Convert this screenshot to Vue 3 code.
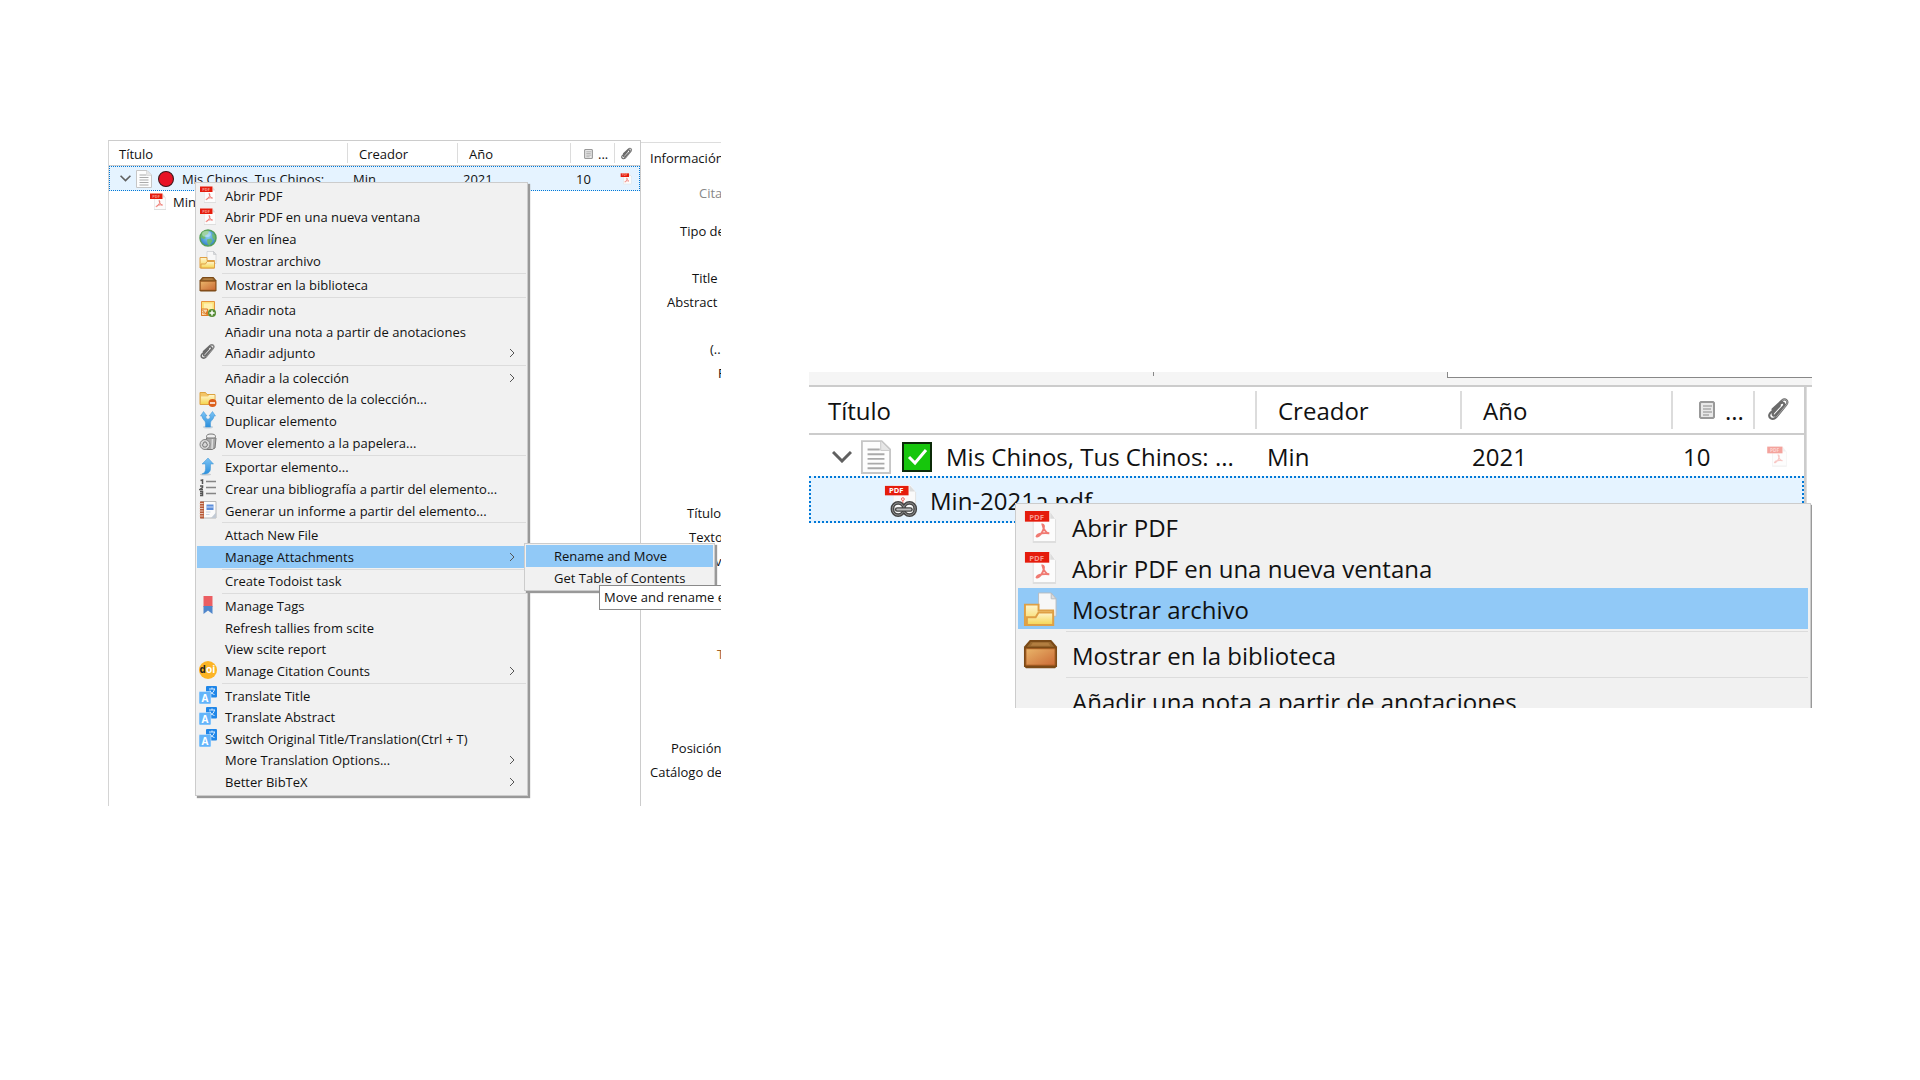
<script setup>
const mainMenu = [
  [
    { label: 'Abrir PDF', icon: 'pdf' },
    { label: 'Abrir PDF en una nueva ventana', icon: 'pdf' },
    { label: 'Ver en línea', icon: 'globe' },
    { label: 'Mostrar archivo', icon: 'folder' }
  ],
  [{ label: 'Mostrar en la biblioteca', icon: 'box' }],
  [
    { label: 'Añadir nota', icon: 'note-add' },
    { label: 'Añadir una nota a partir de anotaciones' },
    { label: 'Añadir adjunto', icon: 'clip', sub: true }
  ],
  [
    { label: 'Añadir a la colección', sub: true },
    { label: 'Quitar elemento de la colección...', icon: 'folder-remove' },
    { label: 'Duplicar elemento', icon: 'duplicate' },
    { label: 'Mover elemento a la papelera...', icon: 'trash' }
  ],
  [
    { label: 'Exportar elemento...', icon: 'export' },
    { label: 'Crear una bibliografía a partir del elemento...', icon: 'list' },
    { label: 'Generar un informe a partir del elemento...', icon: 'report' }
  ],
  [
    { label: 'Attach New File' },
    { label: 'Manage Attachments', sub: true, active: true }
  ],
  [{ label: 'Create Todoist task' }],
  [
    { label: 'Manage Tags', icon: 'tag' },
    { label: 'Refresh tallies from scite' },
    { label: 'View scite report' },
    { label: 'Manage Citation Counts', icon: 'doi', sub: true }
  ],
  [
    { label: 'Translate Title', icon: 'translate' },
    { label: 'Translate Abstract', icon: 'translate' },
    { label: 'Switch Original Title/Translation(Ctrl + T)', icon: 'translate' },
    { label: 'More Translation Options...', sub: true },
    { label: 'Better BibTeX', sub: true }
  ]
]

const fileMenu = [
  [
    { label: 'Abrir PDF', icon: 'pdf' },
    { label: 'Abrir PDF en una nueva ventana', icon: 'pdf' },
    { label: 'Mostrar archivo', icon: 'folder', active: true }
  ],
  [{ label: 'Mostrar en la biblioteca', icon: 'box' }],
  [{ label: 'Añadir una nota a partir de anotaciones' }]
]

const submenu = [
  { label: 'Rename and Move', active: true },
  { label: 'Get Table of Contents' }
]

// Field labels of the details pane: indent from the pane edge and row height
const fields = [
  { label: 'Información', indent: 9, height: 27 },
  { label: 'Cita', indent: 58, height: 35, muted: true },
  { label: 'Tipo de', indent: 39, height: 38 },
  { label: 'Title', indent: 51, height: 47 },
  { label: 'Abstract', indent: 26, height: 24 },
  { label: '(...', indent: 69, height: 47 },
  { label: 'P', indent: 77, height: 24 },
  { label: 'Título', indent: 46, height: 140 },
  { label: 'Texto', indent: 48, height: 24 },
  { label: 'v', indent: 74, height: 24 },
  { label: 'T', indent: 76, height: 93, warm: true },
  { label: 'Posición', indent: 30, height: 94 },
  { label: 'Catálogo de', indent: 9, height: 24 }
]
</script>

<template>
  <main class="page">
    <svg class="sprite" width="0" height="0" aria-hidden="true">
      <defs>
        <linearGradient id="g-box" x1="0" y1="0" x2="1" y2="1">
          <stop offset="0" stop-color="#e9b56a" /><stop offset="1" stop-color="#cb6a35" />
        </linearGradient>
        <linearGradient id="g-blue" x1="0" y1="0" x2="0" y2="1">
          <stop offset="0" stop-color="#7cc4f5" /><stop offset="1" stop-color="#2b8fdc" />
        </linearGradient>
        <linearGradient id="g-folder" x1="0" y1="0" x2="0" y2="1">
          <stop offset="0" stop-color="#fff6d0" /><stop offset="1" stop-color="#f5d550" />
        </linearGradient>
        <radialGradient id="g-globe" cx=".5" cy=".4" r=".6">
          <stop offset="0" stop-color="#8fd0f6" /><stop offset="1" stop-color="#2f7fc9" />
        </radialGradient>
      </defs>
      <symbol id="pdf" viewBox="0 0 36 36">
        <path d="M10 3h18l6 7v24H10z" fill="#dedede" />
        <path d="M11 2h17l5 6v24H11z" fill="#fcfcfc" />
        <path d="M28 2l5 7h-5z" fill="#dcdcdc" />
        <path d="M20 15c3 0 1 6-1 9-2 2-4 4-5 3 1-3 8-4 13-3-3 0-6-4-7-9z" fill="none" stroke="#f07a72" stroke-width="2" />
        <path d="M2 1h25v11H2z" fill="#e51c0c" />
        <text x="14" y="10" text-anchor="middle" font-size="8" font-weight="700" fill="#f79a90">PDF</text>
      </symbol>
      <symbol id="pdf-link" viewBox="0 0 36 36">
        <path d="M10 2h18l6 7v24H10z" fill="#e2e2e2" />
        <path d="M10 1h18l5 7v23H10z" fill="#fafafa" />
        <path d="M27 1l6 7h-6z" fill="#dcdcdc" />
        <circle cx="20" cy="16" r="1.500" fill="none" stroke="#ee5b52" />
        <path d="M20 18v5" stroke="#ee5b52" />
        <path d="M1 2h25v10H1z" fill="#e51c0c" />
        <text x="13" y="10" text-anchor="middle" font-size="8" font-weight="700" fill="#fff">PDF</text>
        <g fill="none" stroke="#454545" stroke-width="4">
          <rect x="9" y="20" width="12" height="13" rx="6" /><rect x="21" y="20" width="12" height="13" rx="6" />
        </g>
        <g fill="none" stroke="#999" stroke-width="1">
          <rect x="9" y="20" width="12" height="13" rx="6" /><rect x="21" y="20" width="12" height="13" rx="6" />
        </g>
        <path d="M14 27h14" stroke="#454545" stroke-width="5" stroke-linecap="round" />
        <path d="M14 27h14" stroke="#bbb" stroke-width="2" stroke-linecap="round" />
      </symbol>
      <symbol id="globe" viewBox="0 0 36 36">
        <circle cx="18" cy="18" r="16" fill="url(#g-globe)" stroke="#559f58" stroke-width="3" />
        <path d="M5 9c4-6 11-7 15-5l-2 6-6 3 1 6-5 1-5-4zM16 21l8-2 3 5-6 9-4-3zM26 8l6 5v10l-5-5z" fill="#70bd62" opacity=".85" />
        <ellipse cx="15" cy="10" rx="9" ry="6" fill="#fff" opacity=".35" />
      </symbol>
      <symbol id="folder" viewBox="0 0 36 36">
        <path d="M16 1h13l5 6v18H16z" fill="#f7f7f7" stroke="#b9bcc0" stroke-width="1" />
        <path d="M29 1v6h5z" fill="#ddd" stroke="#b9bcc0" />
        <path d="M2 13h14v6h15v15H2z" fill="url(#g-folder)" stroke="#dfa045" stroke-width="2" />
        <path d="M4 34V26h9l3-5h15v13z" fill="url(#g-folder)" stroke="#dfa045" stroke-width="2" />
      </symbol>
      <symbol id="box" viewBox="0 0 36 36">
        <path d="M7 2h22l6 7v20l-2 2H3l-2-2V9z" fill="#7b4a17" />
        <path d="M8 4h20l4 5H4z" fill="#9b6a30" />
        <path d="M10 5h16l2 3H8z" fill="#b27e40" />
        <path d="M3 11h30v17H3z" fill="url(#g-box)" stroke="#a35a20" />
      </symbol>
      <symbol id="note-add" viewBox="0 0 36 36">
        <path d="M5 3h26v28H5z" fill="#fbe27a" stroke="#e6943c" stroke-width="2" />
        <path d="M10 7h17v11H10z" fill="#fff1b0" />
        <path d="M5 18h12v13H5z" fill="#f7d9ae" stroke="#dc7b26" stroke-width="2" />
        <path d="M7 20l8 9v-6M7 24l5 5" stroke="#dc7b26" stroke-width="2" fill="none" />
        <circle cx="26" cy="26" r="8" fill="#568c35" />
        <path d="M21 26h10M26 21v10" stroke="#fff" stroke-width="3" />
      </symbol>
      <symbol id="clip" viewBox="0 0 36 36">
        <path d="M9 17L22 5c5-4 10 1 6 6L14 28c-5 5-13 0-8-6L20 9c4-3 7 0 4 4L13 25c-2 2-5 0-3-3l9-10" fill="none" stroke="#6a6a6a" stroke-width="3" stroke-linecap="round" />
        <path d="M22 5c5-4 10 1 6 6L14 28" fill="none" stroke="#bbb" stroke-width="1" />
      </symbol>
      <symbol id="folder-remove" viewBox="0 0 36 36">
        <path d="M2 5h11l3 4h16v20H2z" fill="#f3c567" stroke="#dca340" stroke-width="2" />
        <path d="M4 13h14l3-3h10v18H4z" fill="url(#g-folder)" />
        <circle cx="27" cy="26" r="8" fill="#dc5f1c" /><path d="M22 26h10" stroke="#fff" stroke-width="3" />
      </symbol>
      <symbol id="duplicate" viewBox="0 0 36 36">
        <ellipse cx="18" cy="32" rx="10" ry="3" fill="#c5d2dd" />
        <path d="M3 10L9 1l7 9h-3c0 4 3 5 5 7 2-2 5-3 5-7h-3l7-9 6 9h-3c0 7-7 9-7 14v8H13v-8c0-5-7-7-7-14z" fill="url(#g-blue)" stroke="#3f94d4" />
      </symbol>
      <symbol id="trash" viewBox="0 0 36 36">
        <ellipse cx="24" cy="7" rx="9" ry="5" fill="#eee" stroke="#777" stroke-width="2" />
        <path d="M15 10h19l-2 20-6 3H15z" fill="#aaa" stroke="#777" stroke-width="2" />
        <path d="M27 12l-1 20" stroke="#ddd" stroke-width="3" />
        <circle cx="12" cy="23" r="10" fill="#d6d6d6" stroke="#858585" stroke-width="2" />
        <path d="M7 24l3-6h4l3 6-3 4H9z" fill="none" stroke="#777" stroke-width="2" />
      </symbol>
      <symbol id="export" viewBox="0 0 36 36">
        <ellipse cx="13" cy="33" rx="11" ry="2" fill="#c8ccd0" />
        <path d="M18 0l11 12h-6v9c0 8-6 12-17 11 5-2 7-5 7-11v-9H6z" fill="url(#g-blue)" stroke="#3f94d4" />
      </symbol>
      <symbol id="list" viewBox="0 0 36 36">
        <path d="M14 5h20M14 17h20M14 29h20" stroke="#858585" stroke-width="3" />
        <path d="M3 3l4-1v8M2 14h5v3l-5 4h6M2 25h5v8H2M2 29h5" stroke="#555" stroke-width="3" fill="none" />
      </symbol>
      <symbol id="report" viewBox="0 0 36 36">
        <path d="M4 1h30v33H4z" fill="#fbfbfb" stroke="#b8b8b8" stroke-width="2" />
        <path d="M2 1h8v34H2z" fill="#b85b38" />
        <path d="M1 5h8M1 10h8M1 15h8M1 20h8M1 25h8M1 30h8" stroke="#e7c5b7" stroke-width="2" />
        <path d="M15 7h14v11H15z" fill="#5d8edb" /><path d="M15 12h14" stroke="#cfe0fa" stroke-width="2" />
        <path d="M14 22h9M14 27h7" stroke="#ccd5e2" stroke-width="2" /><path d="M24 34l10-11v11z" fill="#c2cad4" />
      </symbol>
      <symbol id="tag" viewBox="0 0 36 36">
        <path d="M9 0h18v22H9z" fill="#eb5e62" /><path d="M9 20h18v16l-9-7-9 7z" fill="#4f86cb" />
      </symbol>
      <symbol id="doi" viewBox="0 0 36 36">
        <circle cx="18" cy="18" r="18" fill="#fcb425" />
        <text x="1" y="24" font-size="20" font-weight="700" fill="#231f20">d</text>
        <text x="14" y="24" font-size="20" font-weight="700" fill="#fff">oi</text>
      </symbol>
      <symbol id="translate" viewBox="0 0 36 36">
        <rect x="14" y="0" width="22" height="23" rx="2" fill="#1f86e8" />
        <path d="M20 6h12M26 3v3M31 6c-1 6-5 9-10 11M22 9c2 5 5 7 9 8" stroke="#d9ecff" stroke-width="2" fill="none" />
        <rect x="0" y="11" width="24" height="25" rx="2" fill="#63b4fa" stroke="#e3f1fe" />
        <text x="12" y="31" text-anchor="middle" font-size="20" font-weight="700" fill="#fff">A</text>
      </symbol>
      <symbol id="doc" viewBox="0 0 32 36">
        <path d="M1 1h21l9 9v25H1z" fill="#fdfdfd" stroke="#c6c6c6" stroke-width="2" />
        <path d="M21 1v10h10" fill="#e6e6e6" stroke="#c6c6c6" />
        <path d="M7 10h13M7 15h18M7 20h18M7 25h18M7 30h18" stroke="#aaa" stroke-width="2" />
      </symbol>
      <symbol id="note" viewBox="0 0 16 18">
        <path d="M2 1h12l1 1v14l-1 1H2l-1-1V2z" fill="#e8e8e8" stroke="#999" stroke-width="2" />
        <path d="M4 5h9M4 8h8M4 11h9M4 14h6" stroke="#8a8a8a" />
      </symbol>
      <symbol id="check" viewBox="0 0 30 30">
        <path d="M1 1h28v28H1z" fill="#16c60c" stroke="#0b2a08" stroke-width="2" />
        <path d="M7 15l6 6L24 8" fill="none" stroke="#fff" stroke-width="3" />
      </symbol>
      <symbol id="dot" viewBox="0 0 30 30">
        <circle cx="15" cy="15" r="14" fill="#e81224" stroke="#3b1418" stroke-width="2" />
      </symbol>
      <symbol id="twisty" viewBox="0 0 20 12">
        <path d="M1 1l9 9 9-9" fill="none" stroke="#606060" stroke-width="3" />
      </symbol>
      <symbol id="arrow" viewBox="0 0 6 8">
        <path d="M1 0l4 4-4 4" fill="none" stroke="#555" stroke-width="1" />
      </symbol>
    </svg>

    <section class="shot small">
      <div class="tree">
        <table>
          <colgroup><col class="c1"><col class="c2"><col class="c3"><col class="c4"><col class="c5"></colgroup>
          <thead>
            <tr>
              <th>Título</th><th>Creador</th><th>Año</th>
              <th><span class="notes"><svg class="i-note"><use href="#note" /></svg>...</span></th>
              <th><svg class="i-clip" aria-label="Adjunto"><use href="#clip" /></svg></th>
            </tr>
          </thead>
          <tbody>
            <tr class="selected">
              <td><span class="item"><svg class="i-twisty"><use href="#twisty" /></svg><svg class="i-doc"><use href="#doc" /></svg><svg class="i-mark"><use href="#dot" /></svg>Mis Chinos, Tus Chinos:</span></td>
              <td>Min</td><td>2021</td><td>10</td>
              <td><svg class="i-att"><use href="#pdf" /></svg></td>
            </tr>
            <tr>
              <td colspan="5"><span class="item child"><svg class="i-file"><use href="#pdf" /></svg>Min-2021a.pdf</span></td>
            </tr>
          </tbody>
        </table>
      </div>
      <ul class="details">
        <li
          v-for="f in fields"
          :key="f.label"
          :class="{ muted: f.muted, warm: f.warm }"
          :style="{ height: f.height + 'px', paddingLeft: f.indent + 'px' }"
        >{{ f.label }}</li>
      </ul>
      <div class="menu" role="menu">
        <template v-for="(group, g) in mainMenu" :key="g">
          <hr v-if="g">
          <div v-for="m in group" :key="m.label" class="entry">
            <button type="button" role="menuitem" :class="{ active: m.active }">
              <svg v-if="m.icon" class="icon"><use :href="'#' + m.icon" /></svg>
              <span class="label">{{ m.label }}</span>
              <svg v-if="m.sub" class="arrow"><use href="#arrow" /></svg>
            </button>
            <div v-if="m.active" class="submenu" role="menu">
              <button v-for="s in submenu" :key="s.label" type="button" role="menuitem" :class="{ active: s.active }">
                <span class="label">{{ s.label }}</span>
              </button>
              <div class="tooltip" role="tooltip">Move and rename e</div>
            </div>
          </div>
        </template>
      </div>
    </section>

    <section class="shot large">
      <div class="tabs"><span class="tick"></span><span class="search"></span></div>
      <div class="body">
        <div class="tree">
          <table>
            <colgroup><col class="c1"><col class="c2"><col class="c3"><col class="c4"><col class="c5"></colgroup>
            <thead>
              <tr>
                <th>Título</th><th>Creador</th><th>Año</th>
                <th><span class="notes"><svg class="i-note"><use href="#note" /></svg>...</span></th>
                <th><svg class="i-clip" aria-label="Adjunto"><use href="#clip" /></svg></th>
              </tr>
            </thead>
            <tbody>
              <tr>
                <td><span class="item"><svg class="i-twisty"><use href="#twisty" /></svg><svg class="i-doc"><use href="#doc" /></svg><svg class="i-mark"><use href="#check" /></svg>Mis Chinos, Tus Chinos: ...</span></td>
                <td>Min</td><td>2021</td><td>10</td>
                <td><svg class="i-att faded"><use href="#pdf" /></svg></td>
              </tr>
              <tr class="selected">
                <td colspan="5"><span class="item child"><svg class="i-file"><use href="#pdf-link" /></svg>Min-2021a.pdf</span></td>
              </tr>
            </tbody>
          </table>
        </div>
        <div class="edge"></div>
      </div>
      <div class="menu" role="menu">
        <template v-for="(group, g) in fileMenu" :key="g">
          <hr v-if="g">
          <div v-for="m in group" :key="m.label" class="entry">
            <button type="button" role="menuitem" :class="{ active: m.active }">
              <svg v-if="m.icon" class="icon"><use :href="'#' + m.icon" /></svg>
              <span class="label">{{ m.label }}</span>
            </button>
          </div>
        </template>
      </div>
    </section>
  </main>
</template>

<style>
body {
  margin: 0;
  background: #fff;
}
</style>

<style scoped>
.page {
  display: grid;
  grid-template-columns: 613fr 1003fr;
  column-gap: 88px;
  align-items: start;
  padding: 140px 108px;
  font-family: "Open Sans", "Noto Sans", sans-serif;
  color: #111;
}
.sprite { position: absolute; }
.shot {
  position: relative;
  overflow: hidden;
  background: #fff;
  font-size: var(--fs);
}
.small { --fs: 13px; display: grid; grid-template-columns: 533fr 80fr; }
.large { --fs: 24px; margin-top: 232px; height: 336px; }

/* item tree */
table {
  width: 100%;
  table-layout: fixed;
  border-collapse: separate;
  border-spacing: 0;
}
th, td {
  padding: 0;
  text-align: left;
  font-weight: 400;
  white-space: nowrap;
  overflow: hidden;
}
th { background-repeat: no-repeat; background-position: right center; background-image: linear-gradient(#dcdcdc, #dcdcdc); }
th:last-child { background-image: none; }
svg { display: block; flex: none; }
.notes, .item { display: flex; align-items: center; }
.selected { background: #e5f3ff; }
.faded { opacity: .4; }

.small .tree { border-top: 1px solid #ccc; border-left: 1px solid #d4d4d4; border-right: 1px solid #ccc; }
.small .c1 { width: 239px; }
.small .c2 { width: 110px; }
.small .c3 { width: 113px; }
.small .c4 { width: 44px; }
.small th { height: 23px; padding-top: 1px; padding-left: 11px; border-bottom: 1px solid #ccc; background-size: 1px 20px; }
.small th:first-child { padding-left: 10px; }
.small th:last-child, .small td:last-child { padding-left: 5px; }
.small td { height: 25px; padding-left: 5px; line-height: 24px; }
.small .selected { outline: 1px dotted #0078d7; outline-offset: -1px; }
.small td:first-child { padding-left: 11px; }
.small tr + tr td { height: 21px; line-height: 20px; }
.small .notes { gap: 5px; padding-left: 2px; }
.small .i-note { width: 9px; height: 10px; }
.small .i-clip { width: 14px; height: 14px; }
.small .i-att { width: 12px; height: 12px; }
.small .i-twisty { width: 11px; height: 7px; margin-right: 5px; }
.small .i-doc { width: 16px; height: 18px; margin-right: 6px; }
.small .i-mark { width: 16px; height: 16px; margin-right: 8px; }
.small .i-file { width: 18px; height: 18px; margin-right: 6px; }
.small .child { padding-left: 29px; }

.details {
  margin: 2px 0 0;
  padding: 0 0 22px;
  list-style: none;
  border-top: 1px solid #ddd;
  min-width: 0;
  overflow: hidden;
}
.details li {
  display: flex;
  align-items: flex-end;
  box-sizing: border-box;
  line-height: 24px;
  white-space: nowrap;
}
.details .muted { color: #888; }
.details .warm { color: #a4622c; }

.tabs {
  display: grid;
  grid-template-columns: 345fr 293fr 365fr;
  height: 13px;
  background: #f5f5f5;
  border-bottom: 2px solid #ccc;
}
.tick { height: 4px; border-right: 1px solid #888; }
.search { grid-column: 3; height: 5px; background: #fff; border-left: 1px solid #888; border-bottom: 1px solid #888; }
.body { display: grid; grid-template-columns: 1fr 6px; height: 321px; }
.edge { border-left: 1px solid #ddd; }
.large .tree { border-right: 2px solid #ccc; }
.large .c1 { width: 448px; }
.large .c2 { width: 205px; }
.large .c3 { width: 211px; }
.large .c4 { width: 82px; }
.large th { height: 46px; padding-left: 21px; border-bottom: 2px solid #ccc; background-size: 2px 38px; }
.large th:first-child { padding-left: 19px; }
.large th:last-child, .large td:last-child { padding-left: 11px; }
.large td { height: 38px; padding-top: 3px; padding-left: 10px; line-height: 38px; }
.large .selected td { height: 44px; }
.large .selected { outline: 2px dotted #0078d7; outline-offset: -2px; }
.large td:first-child { padding-left: 23px; }
.large .notes { gap: 10px; padding-left: 5px; }
.large .i-note { width: 16px; height: 18px; }
.large .i-clip { width: 26px; height: 26px; }
.large .i-att { width: 22px; height: 22px; }
.large .i-twisty { width: 20px; height: 12px; margin-right: 9px; }
.large .i-doc { width: 30px; height: 34px; margin-right: 11px; }
.large .i-mark { width: 30px; height: 30px; margin-right: 14px; }
.large .i-file { width: 34px; height: 34px; margin-right: 12px; }
.large .child { padding-left: 52px; }

/* context menus */
.menu, .submenu {
  position: absolute;
  box-sizing: border-box;
  background: #f1f1f1;
  border: 1px solid #ccc;
  box-shadow: 2px 2px 1px #999;
}
.menu { display: flex; flex-direction: column; }
.entry { position: relative; display: flex; }
button {
  display: flex;
  align-items: center;
  flex: 1;
  position: relative;
  margin: 0;
  padding: 0;
  border: 0;
  background: none;
  font: inherit;
  color: inherit;
  text-align: left;
  white-space: nowrap;
}
button.active { background: #91c9f7; }
.label { flex: 1; }
.icon { position: absolute; }
hr { margin: 0; border: 0; background: linear-gradient(#dcdcdc, #dcdcdc) no-repeat right center; }

.small .menu { left: 87px; top: 42px; bottom: 10px; width: 333px; padding: 2px 1px; }
.small .entry { flex: 22 1 0; min-height: 0; }
.small .menu hr { flex: 3 1 0; margin-left: 25px; background-size: 100% 1px; }
.small .label { padding-left: 28px; line-height: 20px; }
.small .icon { left: 2px; top: 1px; width: 18px; height: 18px; }
.small .arrow { width: 6px; height: 8px; margin-right: 11px; }
.submenu { left: 327px; top: -3px; width: 191px; padding: 1px; z-index: 1; }
.submenu button { width: 100%; height: 22px; }
.tooltip {
  position: absolute;
  left: 74px;
  top: 41px;
  padding: 0 4px;
  line-height: 23px;
  background: #fff;
  border: 1px solid #8a8a8a;
  white-space: nowrap;
}

.large .menu { left: 206px; right: 1px; top: 131px; padding: 2px; }
.large button { height: 41px; }
.large hr { height: 5px; margin-left: 48px; background-size: 100% 1px; }
.large .label { padding-top: 1px; padding-left: 54px; }
.large .icon { left: 5px; top: 4px; width: 35px; height: 35px; }
</style>
